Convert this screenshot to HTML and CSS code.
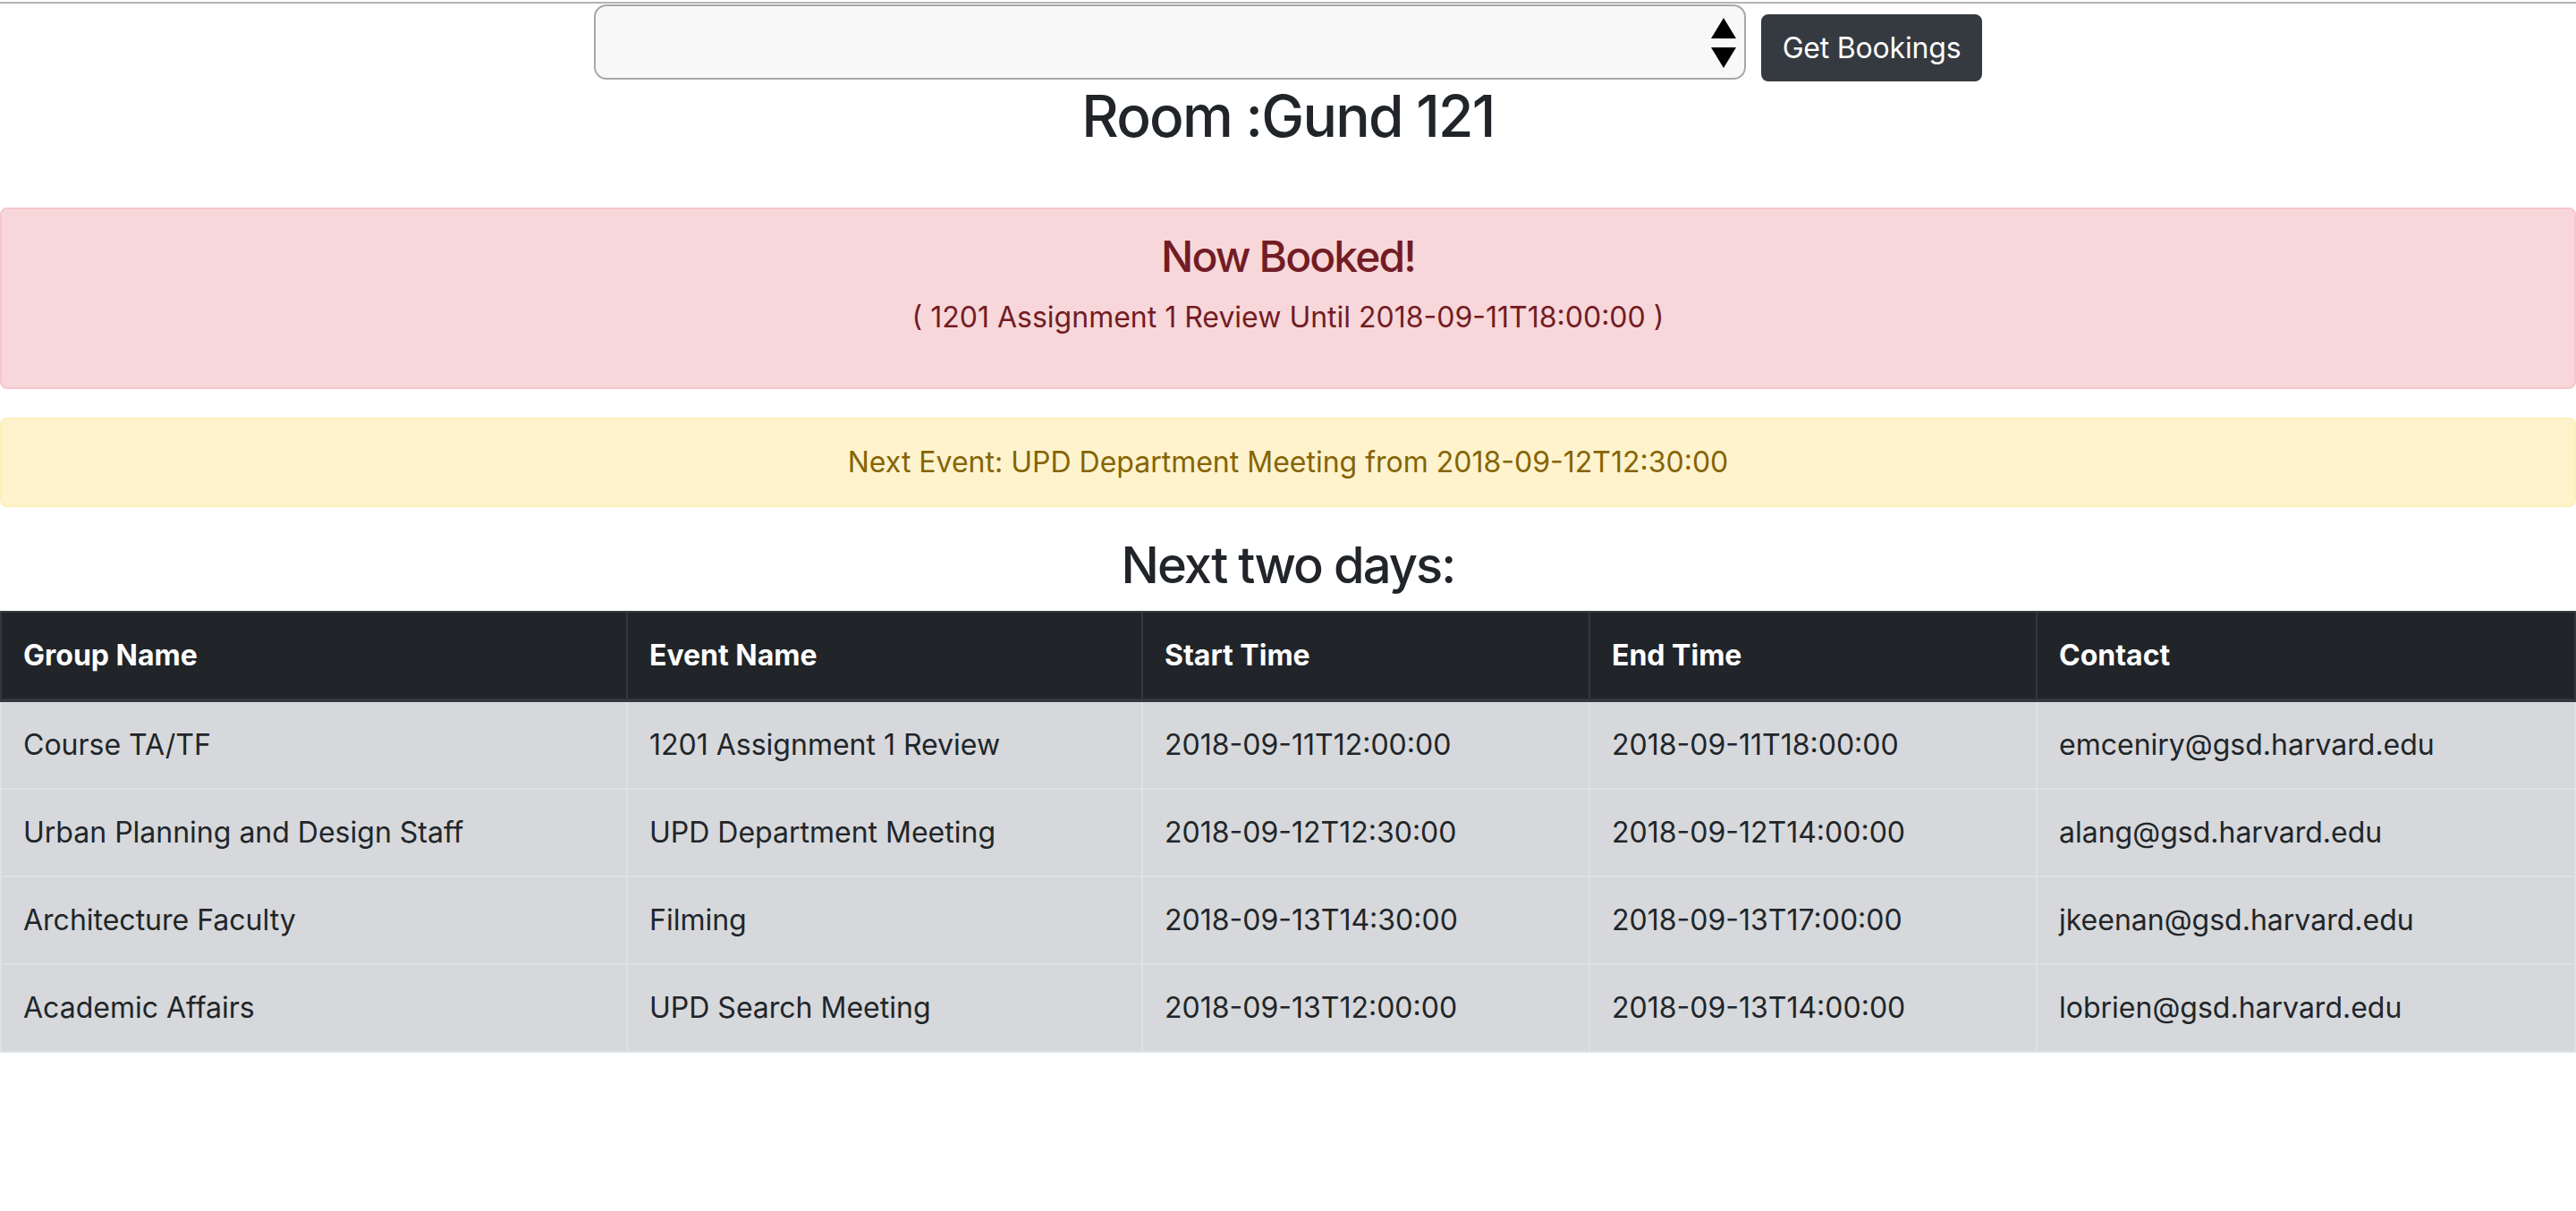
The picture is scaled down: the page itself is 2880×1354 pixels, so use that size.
FILE: index.html
```html
<!DOCTYPE html>
<html>
<head>
<meta charset="utf-8">
<title>Room Bookings</title>
<link rel="stylesheet" href="styles.css">
</head>
<body>
<div class="topline"></div>
<div class="picker">
  <div class="select-box">
    <svg class="arrows" width="30" height="60" viewBox="0 0 30 60">
      <polygon points="15,1 29,24 1,24" fill="#000"/>
      <polygon points="1,34 29,34 15,57" fill="#000"/>
    </svg>
  </div>
  <button class="btn-dark">Get Bookings</button>
</div>
<h2 class="room-title">Room :Gund 121</h2>
<div class="alert alert-danger">
  <h4 class="alert-heading">Now Booked!</h4>
  <p class="alert-text">( 1201 Assignment 1 Review Until 2018-09-11T18:00:00 )</p>
</div>
<div class="alert alert-warning">Next Event: UPD Department Meeting from 2018-09-12T12:30:00</div>
<h3 class="section-title">Next two days:</h3>
<table class="bookings">
  <thead>
    <tr>
      <th class="c-group">Group Name</th>
      <th class="c-event">Event Name</th>
      <th class="c-start">Start Time</th>
      <th class="c-end">End Time</th>
      <th class="c-contact">Contact</th>
    </tr>
  </thead>
  <tbody>
    <tr><td>Course TA/TF</td><td>1201 Assignment 1 Review</td><td>2018-09-11T12:00:00</td><td>2018-09-11T18:00:00</td><td>emceniry@gsd.harvard.edu</td></tr>
    <tr><td>Urban Planning and Design Staff</td><td>UPD Department Meeting</td><td>2018-09-12T12:30:00</td><td>2018-09-12T14:00:00</td><td>alang@gsd.harvard.edu</td></tr>
    <tr><td>Architecture Faculty</td><td>Filming</td><td>2018-09-13T14:30:00</td><td>2018-09-13T17:00:00</td><td>jkeenan@gsd.harvard.edu</td></tr>
    <tr><td>Academic Affairs</td><td>UPD Search Meeting</td><td>2018-09-13T12:00:00</td><td>2018-09-13T14:00:00</td><td>lobrien@gsd.harvard.edu</td></tr>
  </tbody>
</table>
</body>
</html>
```
FILE: styles.css
```css
html, body {
  margin: 0;
  padding: 0;
  background: #fff;
}
body {
  font-family: Inter, "Noto Sans", "Liberation Sans", sans-serif;
  font-size: 32px;
  line-height: 1.5;
  color: #212529;
}
.topline {
  height: 0;
  margin-top: 2px;
  border-top: 2px solid #b4b4b4;
}
.picker {
  display: flex;
  justify-content: center;
  align-items: flex-start;
  gap: 17px;
  margin-top: 1px;
  height: 87px;
}
.select-box {
  width: 1276px;
  height: 80px;
  border: 2px solid #a7a7a7;
  border-radius: 14px;
  background: #f8f8f8;
  display: flex;
  justify-content: flex-end;
  align-items: center;
  padding-right: 8px;
  box-sizing: content-box;
}
.arrows {
  display: block;
  margin-top: 4px;
}
.btn-dark {
  margin-top: 11px;
  height: 75px;
  padding: 0 22px;
  background: #343a40;
  color: #fff;
  border: 2px solid #343a40;
  border-radius: 8px;
  font-family: inherit;
  font-size: 32px;
  line-height: 48px;
  font-weight: 400;
  letter-spacing: -0.2px;
}
.room-title {
  margin: 0 0 63px;
  text-align: center;
  font-size: 64px;
  font-weight: 500;
  line-height: 1.2;
  letter-spacing: -1.7px;
}
.alert {
  margin: 0 0 32px;
  padding: 24px 40px;
  border: 2px solid transparent;
  border-radius: 8px;
  text-align: center;
}
.alert-danger {
  background: #f8d7da;
  border-color: #f5c6cb;
  color: #721c24;
}
.alert-warning {
  background: #fff3cd;
  border-color: #ffeeba;
  color: #856404;
}
.alert-heading {
  margin: 0 0 16px;
  font-size: 48px;
  font-weight: 500;
  line-height: 1.2;
  letter-spacing: -1.9px;
}
.alert-text {
  margin: 0 0 30px;
}
.section-title {
  margin: 0 0 16px;
  text-align: center;
  font-size: 56px;
  font-weight: 500;
  line-height: 1.2;
  letter-spacing: -1.9px;
}
.bookings {
  width: 100%;
  border-collapse: collapse;
  table-layout: fixed;
}
.bookings th,
.bookings td {
  box-sizing: border-box;
  padding: 24px;
  text-align: left;
  vertical-align: top;
  line-height: 48px;
  white-space: nowrap;
}
.bookings th {
  background: #212529;
  color: #fff;
  font-weight: 700;
  border: 2px solid #32383e;
  border-bottom-width: 4px;
}
.bookings td {
  background: #d6d8db;
  border: 2px solid #dee2e6;
}
.c-group { width: 700px; }
.c-event { width: 576px; }
.c-start { width: 500px; }
.c-end { width: 500px; }
.c-contact { width: auto; }
```
